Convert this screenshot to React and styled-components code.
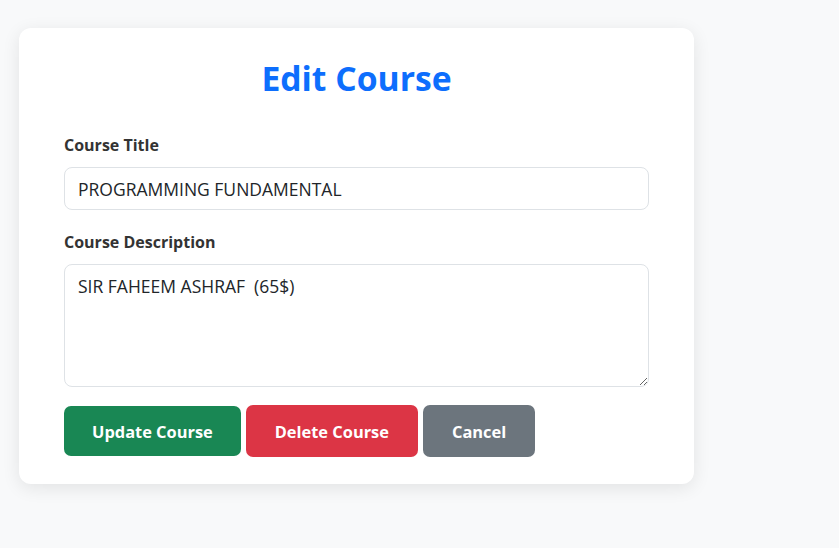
import React, { useState } from 'react';
import styled, { createGlobalStyle } from 'styled-components';

const GlobalStyle = createGlobalStyle`
    html, body {
        margin: 0;
        padding: 0;
        background: #f8f9fa;
        font-family: 'Open Sans', 'Noto Sans', sans-serif;
        color: #212529;
    }
    * {
        box-sizing: border-box;
    }
`

const Page = styled.div`
    width: 839px;
    height: 548px;
    padding: 28px 0 0 19px;
`

const Card = styled.form`
    width: 675px;
    height: 456px;
    background: #fff;
    border-radius: 12px;
    box-shadow: 0 4px 18px rgba(0, 0, 0, 0.09);
    padding: 26px 45px 0 45px;
`

const Title = styled.h2`
    margin: 0 0 31px 0;
    text-align: center;
    color: #0d6efd;
    font-size: 33.7px;
    font-weight: 700;
    line-height: 48px;
`

const Field = styled.div`
    display: flex;
    flex-direction: column;
    margin-bottom: 20px;
`

const Label = styled.label`
    font-size: 16px;
    font-weight: 700;
    color: #333;
    line-height: 24px;
    margin-bottom: 10px;
`

const TextInput = styled.input`
    height: 43px;
    width: 100%;
    border: 1px solid #dee2e6;
    border-radius: 8px;
    padding: 0 13px;
    font-family: inherit;
    font-size: 17.5px;
    color: #212529;
    outline: none;
`

const TextArea = styled.textarea`
    height: 123px;
    width: 100%;
    border: 1px solid #dee2e6;
    border-radius: 8px;
    padding: 9px 13px;
    font-family: inherit;
    font-size: 17.5px;
    line-height: 24px;
    color: #212529;
    resize: vertical;
    outline: none;
`

const Actions = styled.div`
    display: flex;
    align-items: center;
    gap: 5px;
    margin-top: -2px;
`

const tones = {
    success: '#198754',
    danger: '#dc3545',
    secondary: '#6c757d'
}

const Button = styled.button`
    height: ${props => props.$tall ? '52px' : '50px'};
    padding: 0 ${props => props.$pad || 28}px;
    border: none;
    border-radius: 7px;
    background: ${props => tones[props.$tone]};
    color: #fff;
    font-family: inherit;
    font-size: 16.4px;
    font-weight: 700;
    cursor: pointer;
`

const App = () => {
    const [title, setTitle] = useState('PROGRAMMING FUNDAMENTAL');
    const [desc, setDesc] = useState('SIR FAHEEM ASHRAF  (65$)');

    return (
        <Page>
            <GlobalStyle />
            <Card onSubmit={(e) => e.preventDefault()}>
                <Title>Edit Course</Title>
                <Field>
                    <Label htmlFor="title">Course Title</Label>
                    <TextInput id="title" value={title} onChange={(e) => setTitle(e.target.value)} />
                </Field>
                <Field>
                    <Label htmlFor="desc">Course Description</Label>
                    <TextArea id="desc" value={desc} onChange={(e) => setDesc(e.target.value)} />
                </Field>
                <Actions>
                    <Button type="submit" $tone="success">Update Course</Button>
                    <Button type="button" $tone="danger" $pad={29} $tall>Delete Course</Button>
                    <Button type="button" $tone="secondary" $pad={29} $tall>Cancel</Button>
                </Actions>
            </Card>
        </Page>
    )
}

export default App;
